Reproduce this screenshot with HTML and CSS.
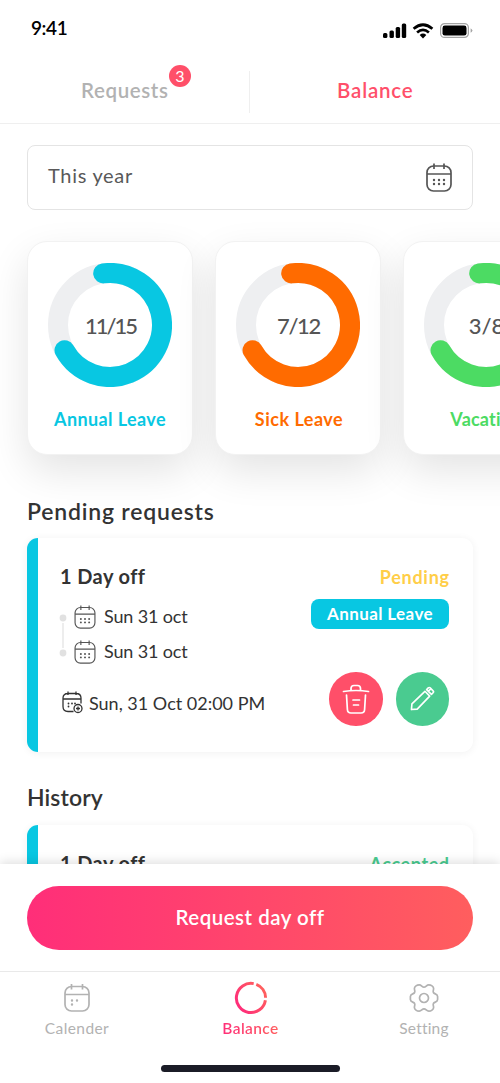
FILE: index.html
```html
<!DOCTYPE html>
<html lang="en">
<head>
<meta charset="utf-8">
<title>Leave balance</title>
<link rel="stylesheet" href="styles.css">
</head>
<body>
<svg class="defs" width="0" height="0" aria-hidden="true">
  <symbol id="calendar" viewBox="0 0 26 29">
    <rect x="1" y="3" width="24" height="25" rx="6.5"/>
    <path d="M1 11H25M8 .5V6M18 .5V6"/>
    <path class="dots" d="M8 17H8.01M13 17H13.01M18 17H18.01M8 21H8.01M13 21H13.01M18 21H18.01"/>
  </symbol>
</svg>
<div class="app">
  <header class="status">
    <span class="time">9:41</span>
    <svg class="status-icons" width="90" height="18" viewBox="0 0 90 18">
      <rect x="0" y="11" width="4.4" height="5" rx="1.5"/>
      <rect x="6.5" y="8.5" width="4.4" height="7.5" rx="1.5"/>
      <rect x="12.7" y="5" width="4.4" height="11" rx="1.5"/>
      <rect x="18.8" y="1.5" width="4.4" height="14.5" rx="1.5"/>
      <g fill="none" stroke="#000" stroke-width="2.7">
        <path d="M30.6 6.7Q40 -1.2 49.4 6.7"/>
        <path d="M34.1 10.5Q40 5.4 45.9 10.5"/>
      </g>
      <path d="M36.7 13Q40 10.2 43.3 13L40 16.4Z"/>
      <rect x="57.6" y="1.6" width="27.8" height="13.8" rx="4" fill="none" stroke="#a4a4a4" stroke-width="1.2"/>
      <rect x="59.5" y="3.6" width="24" height="10" rx="2.3"/>
      <path d="M87.6 6.2Q91.2 8.5 87.6 10.8Z" fill="#a4a4a4"/>
    </svg>
  </header>
  <nav class="tabs">
    <div class="tab"><span class="t-requests">Requests</span><span class="count">3</span></div>
    <div class="tab active"><span class="t-balance">Balance</span></div>
  </nav>
  <main class="content">
    <div class="period">
      <span>This year</span>
      <svg class="cal" width="26" height="29"><use href="#calendar"/></svg>
    </div>
    <section class="cards">
      <article class="card cyan">
        <div class="ring">
          <svg width="124" height="124" viewBox="-62 -62 124 124"><circle r="52"/><path d="M-6.8-51.6A52 52 0 1 1-45.5 25.2"/></svg>
          <span class="long">11/15</span>
        </div>
        <h3 class="l-annual">Annual Leave</h3>
      </article>
      <article class="card orange">
        <div class="ring">
          <svg width="124" height="124" viewBox="-62 -62 124 124"><circle r="52"/><path d="M-6.8-51.6A52 52 0 1 1-45.5 25.2"/></svg>
          <span>7/12</span>
        </div>
        <h3 class="l-sick">Sick Leave</h3>
      </article>
      <article class="card green">
        <div class="ring">
          <svg width="124" height="124" viewBox="-62 -62 124 124"><circle r="52"/><path d="M-6.8-51.6A52 52 0 1 1-45.5 25.2"/></svg>
          <span class="short">3/8</span>
        </div>
        <h3 class="l-vac">Vacation</h3>
      </article>
    </section>
    <h2 class="h-pending">Pending requests</h2>
    <article class="request">
      <div class="info">
        <h4>1 Day off</h4>
        <div class="range">
          <svg class="track" width="8" height="44" viewBox="0 0 8 44"><path d="M4 9V34"/><circle cx="4" cy="4" r="3.4"/><circle cx="4" cy="39" r="3.4"/></svg>
          <div class="dates">
            <div class="date"><svg class="cal small" width="22" height="24"><use href="#calendar"/></svg><span>Sun 31 oct</span></div>
            <div class="date"><svg class="cal small" width="22" height="24"><use href="#calendar"/></svg><span>Sun 31 oct</span></div>
          </div>
        </div>
        <div class="created">
          <svg class="line" width="22" height="23" viewBox="0 0 22 23">
            <path d="M11.500 20.500H6Q1 20.500 1 15.500V7Q1 2.500 6 2.500H14Q19 2.500 19 7V12.500M1 8H19M6 .500V4M14 .500V4"/>
            <path class="dots" d="M6.500 12.500H6.510M10 12.500H10.010M13 12.500H13.010M6.500 15.500H6.510"/>
            <circle cx="16" cy="17.500" r="4"/><path d="M16 15.500V19.500M14 17.500H18"/>
          </svg>
          <span>Sun, 31 Oct 02:00 PM</span>
        </div>
      </div>
      <div class="side">
        <span class="state pending">Pending</span>
        <span class="badge">Annual Leave</span>
        <div class="actions">
          <button class="round delete" aria-label="Delete"><svg width="28" height="30" viewBox="0 0 28 30"><path d="M1.500 7.500Q14 5.500 26.500 7.500M9 6V4.500Q9 1.500 12 1.500H15.500Q18.500 1.500 18.500 4.500V6M4.500 11L5.400 25.500Q5.600 29 9 29H19Q22.400 29 22.600 25.500L23.500 11M11 16H17.500M11.500 21H16.500"/></svg></button>
          <button class="round edit" aria-label="Edit"><svg width="25" height="25" viewBox="0 0 26 26"><path d="M1.500 24.500L2 18.500L15.500 5.500L20.500 10.500L7.500 24ZM17.300 3.700L19 2Q20 1 21 2L24 5Q25 6 24 7L22.300 8.700ZM20.800 3.800L19 5.500"/></svg></button>
        </div>
      </div>
    </article>
    <h2 class="h-history">History</h2>
    <article class="request">
      <div class="info"><h4>1 Day off</h4></div>
      <div class="side"><span class="state accepted">Accepted</span></div>
    </article>
  </main>
  <footer class="bottom">
    <button class="cta"><span>Request day off</span></button>
    <nav class="menu">
      <a class="item"><svg class="line" width="28" height="30" viewBox="0 0 28 30"><rect x="2" y="3.500" width="24" height="24.500" rx="6.500"/><path d="M2 11.500H26M8.500 1V6.500M19.500 1V6.500"/><path class="dots" d="M9 17.500H9.010M14 17.500H14.010M9 21.500H9.010"/></svg><span class="n-cal">Calender</span></a>
      <a class="item current"><svg width="34" height="34" viewBox="-17 -17 34 34">
        <defs><linearGradient id="warm" gradientUnits="userSpaceOnUse" x1="-12" y1="8" x2="12" y2="-8"><stop offset="0" stop-color="#ff2e79"/><stop offset="1" stop-color="#ff5e5e"/></linearGradient></defs>
        <path d="M14.400 2.200A14.600 14.600 0 1 1 2.700-14.350M5.300-13.600A14.600 14.600 0 0 1 14.600 -.3" fill="none" stroke="url(#warm)" stroke-width="3"/></svg><span class="n-bal">Balance</span></a>
      <a class="item"><svg class="line" width="30" height="30" viewBox="-15 -15 30 30"><circle r="4.500"/><path d="M0-10.800C2-10.800 2.500-13.200 4.800-13.200C7-13.200 9.600-11.700 9.600-9.500C9.600-7.800 8.700-7 9.400-5.500C10.300-3.800 13.600-4.200 13.600-1.500V1.500C13.600 4.200 10.300 3.800 9.400 5.500C8.700 7 9.600 7.800 9.600 9.500C9.600 11.700 7 13.200 4.800 13.200C2.500 13.200 2 10.800 0 10.800C-2 10.800-2.500 13.200-4.800 13.200C-7 13.200-9.600 11.700-9.600 9.500C-9.600 7.800-8.700 7-9.400 5.500C-10.300 3.800-13.600 4.200-13.600 1.500V-1.500C-13.600-4.200-10.300-3.800-9.400-5.500C-8.700-7-9.600-7.800-9.600-9.500C-9.600-11.700-7-13.200-4.800-13.200C-2.500-13.200-2-10.800 0-10.800Z"/></svg><span class="n-set">Setting</span></a>
    </nav>
    <div class="home"></div>
  </footer>
</div>
</body>
</html>
```
FILE: styles.css
```css
* { box-sizing: border-box; }
body { margin: 0; background: #fff; font-family: Lato, "Open Sans", sans-serif; font-variant-ligatures: none; color: #333; }
h2, h3, h4 { margin: 0; }
button { border: 0; padding: 0; font: inherit; color: #fff; }
svg { display: block; flex: none; }
.defs { position: absolute; }
.app { width: 500px; height: 1083px; overflow: hidden; display: flex; flex-direction: column; }

.status { height: 60px; padding: 15px 27px 0 31px; display: flex; justify-content: space-between; color: #000; }
.time { font-size: 19px; line-height: 26px; font-weight: 600; letter-spacing: -0.4px; }
.status-icons { margin-top: 6.500px; }

.tabs { height: 64px; border-bottom: 1px solid #efefef; display: flex; }
.tab { flex: 1; height: 60px; display: flex; justify-content: center; font-size: 20.500px; line-height: 60px; font-weight: 600; color: #b2b2b2; position: relative; }
.t-requests { letter-spacing: .6px; }
.t-balance { letter-spacing: .8px; }
.tab.active { color: #ff4f6a; padding-left: 1px; }
.tab.active::before { content: ""; position: absolute; left: -1px; top: 11px; width: 1px; height: 42px; background: #efefef; }
.count { position: absolute; left: 169px; top: 5px; width: 22px; height: 22px; border-radius: 50%; background: #ff4f69; color: #fff; font-size: 16px; line-height: 22px; font-weight: 400; text-align: center; }

.content { flex: 1; min-height: 0; overflow: hidden; padding: 21px 27px 0; }
.period { height: 65px; border: 1.500px solid #e4e4e4; border-radius: 8px; padding: 0 20px; display: flex; align-items: center; justify-content: space-between; font-size: 20px; color: #595959; }
.period span { padding-bottom: 5px; letter-spacing: .7px; }
.cal, .line { fill: none; stroke: #555; stroke-width: 1.700; }
.cal.small { stroke-width: 1.400; margin-top: 1px; }
.dots { stroke-width: 2.400; stroke-linecap: round; }
.small .dots { stroke-width: 2; }

.cards { display: flex; gap: 22px; margin-top: 31px; }
.card { flex: none; width: 166px; height: 214px; border: 1px solid #f2f2f2; border-radius: 20px; background: #fff; padding: 21px 0 0; display: flex; flex-direction: column; align-items: center; box-shadow: 0 16px 40px rgba(0, 0, 0, .11); }
.ring { display: grid; place-items: center; }
.ring > * { grid-area: 1 / 1; }
.ring circle { fill: none; stroke: #eeeff1; stroke-width: 20; }
.ring path { fill: none; stroke: currentColor; stroke-width: 20; stroke-linecap: round; }
.ring span { color: #555; font-size: 22px; font-weight: 500; letter-spacing: -1.300px; margin-right: -1px; }
.ring .long { letter-spacing: -2px; }
.ring .short { letter-spacing: 0; }
.card h3 { font-size: 18px; line-height: 24px; font-weight: 700; margin-top: 20px; letter-spacing: .4px; }
.card .l-sick { letter-spacing: .5px; margin-left: 2px; }
.card .l-vac { letter-spacing: .2px; }
.cyan { color: #08c7e2; }
.orange { color: #ff6b00; }
.green { color: #4cdb63; }

h2 { font-size: 23px; line-height: 30px; font-weight: 600; color: #333; margin-top: 41px; letter-spacing: .8px; }
.request { height: 214px; margin-top: 12px; border-left: 11px solid #08c7e2; border-radius: 11px; background: #fff; box-shadow: 0 1px 9px rgba(0, 0, 0, .06); padding: 26px 24px 0 22px; display: flex; justify-content: space-between; }
h2.h-history { margin: 30px 0 13px; letter-spacing: .1px; }
.h-history + .request { margin-top: 0; }
h4 { font-size: 20px; line-height: 24px; font-weight: 700; letter-spacing: .4px; }
.range { display: flex; gap: 10px; margin-top: 16px; }
.track { margin-top: 10px; margin-left: -1px; fill: #e1e1e1; stroke: none; }
.track path { stroke: #e1e1e1; stroke-width: 1.200; }
.dates { display: flex; flex-direction: column; gap: 11px; margin-left: -3px; }
.date { height: 24px; display: flex; align-items: center; gap: 8px; font-size: 18px; letter-spacing: -.15px; }
.created { display: flex; align-items: center; gap: 5px; margin: 27px 0 0 2px; font-size: 18px; line-height: 26px; white-space: nowrap; }
.created .line { stroke: #333; stroke-width: 1.300; margin-top: -2px; }
.created .dots { stroke-width: 1.800; }
.side { display: flex; flex-direction: column; align-items: flex-end; }
.state { font-size: 18px; line-height: 27px; font-weight: 700; letter-spacing: .7px; margin-right: -.7px; }
.pending { color: #ffce48; }
.accepted { color: #4acb90; letter-spacing: .6px; }
.badge { width: 138px; height: 30px; margin-top: 8px; border-radius: 8px; background: #08c7e2; color: #fff; font-size: 17px; line-height: 30px; font-weight: 700; letter-spacing: .4px; text-align: center; }
.actions { display: flex; gap: 13px; margin-top: 43px; }
.round { width: 53.500px; height: 53.500px; border-radius: 50%; display: grid; place-items: center; }
.round svg { fill: none; stroke: #fff; stroke-width: 1.700; stroke-linecap: round; stroke-linejoin: round; }
.delete { background: #ff4f69; }
.edit { background: #4acb90; }

.bottom { position: relative; height: 219px; background: #fff; box-shadow: 0 -2px 10px rgba(0, 0, 0, .13); display: flex; flex-direction: column; align-items: center; }
.cta { width: 446px; height: 64px; flex: none; margin-top: 21.500px; border-radius: 32px; background: linear-gradient(90deg, #ff2e79, #ff5e5e); font-size: 20.500px; line-height: 62px; padding-bottom: 2px; font-weight: 600; letter-spacing: .5px; }
.menu { width: 100%; height: 94px; flex: none; margin-top: 21.500px; border-top: 1px solid #e9e9e9; display: flex; justify-content: space-between; padding: 9px 23px 0 24px; }
.item { width: 106px; display: flex; flex-direction: column; align-items: center; font-size: 15.500px; line-height: 20px; color: #b2b2b2; letter-spacing: .4px; }
.item svg { height: 34px; }
.item span { margin-top: 3px; }
.item .line { stroke: #b2b2b2; stroke-width: 1.700; }
.item .n-set { letter-spacing: .2px; }
.current span { font-weight: 600; background: linear-gradient(90deg, #ff2e79, #ff5e5e); background-clip: text; -webkit-background-clip: text; color: transparent; }
.home { width: 179px; height: 7px; border-radius: 4px; background: #1b1c27; }
```
